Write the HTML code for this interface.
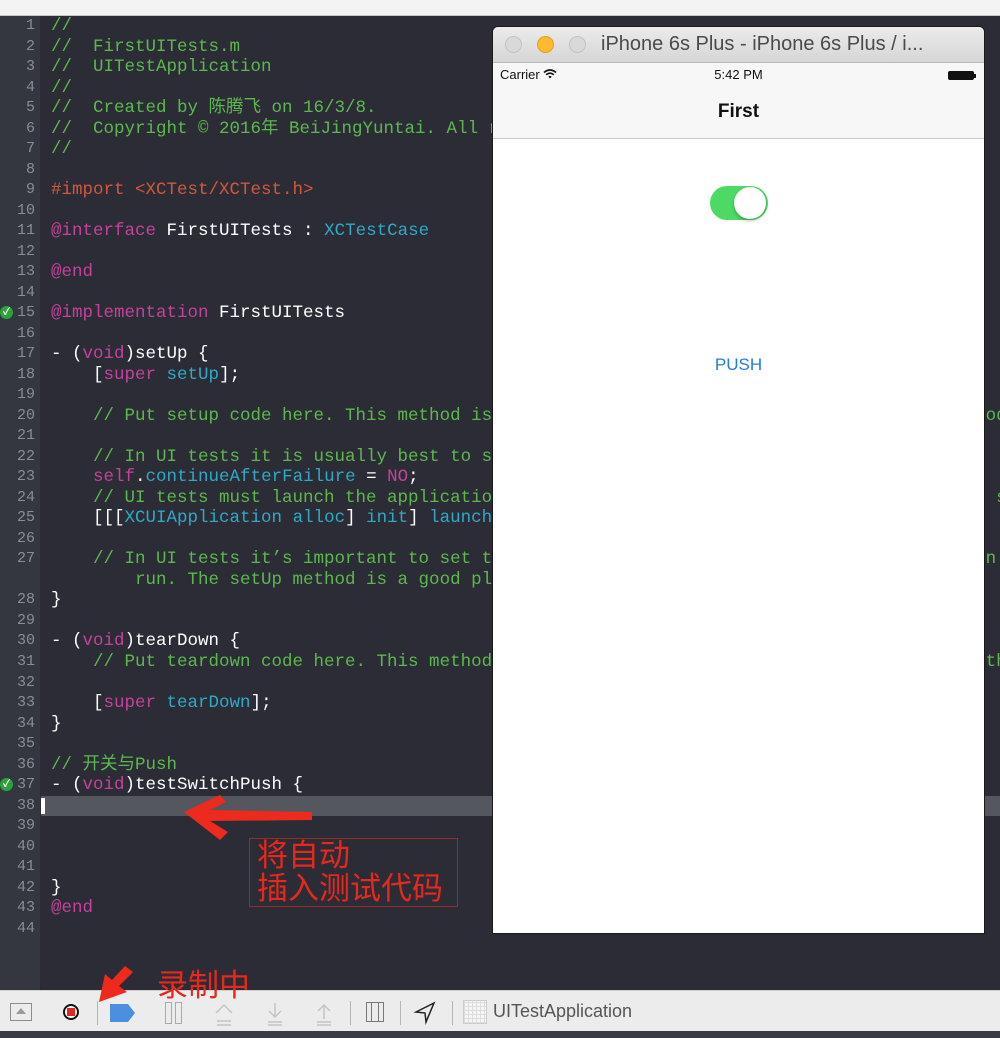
<!DOCTYPE html>
<html><head><meta charset="utf-8"><style>
html,body{margin:0;padding:0;}
body{width:1000px;height:1038px;overflow:hidden;position:relative;background:#2b2c35;font-family:"Liberation Sans","Noto Sans CJK SC",sans-serif;}
#top{position:absolute;left:0;top:0;width:1000px;height:15px;background:#f3f3f3;border-bottom:1px solid #c8c8c8;}
#gut{position:absolute;left:0;top:16px;width:40px;height:974px;background:#343640;border-right:1px solid #2a2b32;}
pre{margin:0;font-family:"Liberation Mono","Noto Sans CJK SC",monospace;font-size:17.5px;line-height:20.52px;}
#nums{position:absolute;left:0;top:16px;width:35px;text-align:right;color:#8b8d96;font-size:15px;}
#code{position:absolute;left:51px;top:16px;width:949px;overflow:hidden;color:#ffffff;white-space:pre;}
.c{color:#5cb84e}.k{color:#c4429b}.t{color:#2fa9c6}.p{color:#d2583d}
#hl{position:absolute;left:41px;top:796px;width:959px;height:20px;background:#55575e;}
#cur2{position:absolute;left:41px;top:798px;width:4px;height:16px;background:#fff}
.chk{position:absolute;left:0;width:13px;height:13px;border-radius:50%;background:#2aa43a;color:#fff;font-size:10px;line-height:13px;text-align:center;font-weight:bold;}
#sim{position:absolute;left:493px;top:27px;width:491px;height:906px;background:#fff;border-radius:5px 5px 0 0;box-shadow:0 0 0 1px #1a1a1a;}
#tb{height:35px;background:linear-gradient(#ebebeb,#d6d6d6);border-bottom:1px solid #b8b8b8;border-radius:5px 5px 0 0;position:relative;}
.dot{position:absolute;top:9px;width:17px;height:17px;border-radius:50%;background:#d9d9d9;border:1px solid #c2c2c2;box-sizing:border-box;}
#tt{position:absolute;left:108px;top:6px;font-size:20px;color:#4a4a4a;}
#nav{height:75px;background:#f7f7f7;border-bottom:1px solid #c9c9c9;position:relative;}
#tool{position:absolute;left:0;top:990px;width:1000px;height:40px;background:#ececec;border-top:1px solid #d0d0d0;}
#bot{position:absolute;left:0;top:1031px;width:1000px;height:7px;background:#3a3c45;}
.sep{position:absolute;top:10px;width:1px;height:24px;background:#b5b5b5;}
.red{position:absolute;color:#e8271d;font-size:31px;line-height:33px;}
</style></head><body>
<div id="top"></div>
<div id="gut"></div>
<div id="hl"></div><div id="cur2"></div>
<pre id="nums">1
2
3
4
5
6
7
8
9
10
11
12
13
14
15
16
17
18
19
20
21
22
23
24
25
26
27

28
29
30
31
32
33
34
35
36
37
38
39
40
41
42
43
44</pre>
<div class="chk" style="top:306px">✓</div>
<div class="chk" style="top:778px">✓</div>
<pre id="code"><span class="c">//
//  FirstUITests.m
//  UITestApplication
//
//  Created by 陈腾飞 on 16/3/8.
//  Copyright © 2016年 BeiJingYuntai. All rights reserved.
//</span>

<span class="p">#import &lt;XCTest/XCTest.h&gt;</span>

<span class="k">@interface</span> FirstUITests : <span class="t">XCTestCase</span>

<span class="k">@end</span>

<span class="k">@implementation</span> FirstUITests

- (<span class="k">void</span>)setUp {
    [<span class="k">super</span> <span class="t">setUp</span>];

<span class="c">    // Put setup code here. This method is called before the invocation of each test method in the class.</span>

<span class="c">    // In UI tests it is usually best to stop immediately when a failure occurs.</span>
    <span class="k">self</span>.<span class="t">continueAfterFailure</span> = <span class="k">NO</span>;
<span class="c">    // UI tests must launch the application that they test. Doing this in setup will make sure it happens</span>
    [[[<span class="t">XCUIApplication</span> <span class="t">alloc</span>] <span class="t">init</span>] <span class="t">launch</span>];

<span class="c">    // In UI tests it’s important to set the initial state - such as interface orientation - required fon
        run. The setUp method is a good place to do this.</span>
}

- (<span class="k">void</span>)tearDown {
<span class="c">    // Put teardown code here. This method is called after the invocation of each test method in the class.</span>

    [<span class="k">super</span> <span class="t">tearDown</span>];
}

<span class="c">// 开关与Push</span>
- (<span class="k">void</span>)testSwitchPush {




}
<span class="k">@end</span>
</pre>

<svg style="position:absolute;left:170px;top:790px" width="160" height="50"><path d="M14 22 L50 5 L56 12 L40 20 L142 22 L142 30 L40 31 L58 42 L50 50 Z" fill="#ee2a1e"/></svg>
<div style="position:absolute;left:249px;top:838px;width:207px;height:67px;border:1px solid #9a2a24;"></div>
<div class="red" style="left:257px;top:839px">将自动<br>插入测试代码</div>

<div id="sim">
<div id="tb">
<div class="dot" style="left:12px"></div>
<div class="dot" style="left:44px;background:#fdbb2d;border-color:#e0a020"></div>
<div class="dot" style="left:76px"></div>
<div id="tt">iPhone 6s Plus - iPhone 6s Plus / i...</div>
</div>
<div id="nav">
<div style="position:absolute;left:7px;top:4px;font-size:13px;color:#111">Carrier <svg width="14" height="10" viewBox="0 0 14 10" style="vertical-align:0"><path d="M1 3.5 Q7 -1.5 13 3.5 M3.2 5.8 Q7 2.5 10.8 5.8" stroke="#111" stroke-width="1.6" fill="none"/><path d="M5.3 7.6 Q7 6.4 8.7 7.6 L7 9.5 Z" fill="#111"/></svg></div>
<div style="position:absolute;left:0;width:491px;text-align:center;top:4px;font-size:13px;color:#111">5:42 PM</div>
<div style="position:absolute;left:455px;top:8px;width:26px;height:9px;background:#111;border-radius:2px"></div>
<div style="position:absolute;left:481px;top:11px;width:2px;height:4px;background:#111"></div>
<div style="position:absolute;left:0;width:491px;text-align:center;top:38px;font-size:19px;font-weight:bold;color:#111">First</div>
</div>
<div style="position:absolute;left:217px;top:159px;width:58px;height:34px;border-radius:17px;background:#4cd964;"></div>
<div style="position:absolute;left:241px;top:160px;width:32px;height:32px;border-radius:50%;background:#fff;box-shadow:0 2px 3px rgba(0,0,0,.25);"></div>
<div style="position:absolute;left:0;width:491px;text-align:center;top:328px;font-size:17px;color:#1f7de0">PUSH</div>
</div>

<div id="tool">
<div style="position:absolute;left:10px;top:12px;width:22px;height:18px;border:1px solid #8d8d8d;box-sizing:border-box"></div>
<div style="position:absolute;left:16px;top:17px;width:0;height:0;border-left:5px solid transparent;border-right:5px solid transparent;border-bottom:6px solid #999"></div>
<div style="position:absolute;left:63px;top:13px;width:16px;height:16px;border:2px solid #111;border-radius:50%;box-sizing:border-box;background:#fff"></div>
<div style="position:absolute;left:67px;top:17px;width:8px;height:8px;background:#e0271d"></div>
<div class="sep" style="left:97px"></div>
<svg style="position:absolute;left:110px;top:13px" width="26" height="18"><path d="M0 0 H18 L25 9 L18 18 H0 Z" fill="#4a8fe0"/></svg>
<div style="position:absolute;left:165px;top:11px;width:5px;height:20px;border:1px solid #aaa"></div>
<div style="position:absolute;left:175px;top:11px;width:5px;height:20px;border:1px solid #aaa"></div>
<svg style="position:absolute;left:213px;top:10px" width="130" height="26" fill="none" stroke="#c4c4c4" stroke-width="1.5"><path d="M3 12 L11 4 L19 12 M4 20 H18 M4 24 H18"/><path d="M62 2 V16 M56 10 L62 16 L68 10 M55 21 H69 M55 24 H69"/><path d="M111 18 V4 M105 10 L111 4 L117 10 M104 21 H118 M104 24 H118"/></svg>
<div class="sep" style="left:350px"></div>
<div style="position:absolute;left:366px;top:11px;width:18px;height:20px;border:1px solid #777;box-sizing:border-box"></div>
<div style="position:absolute;left:371px;top:11px;width:8px;height:20px;border-left:1px solid #777;border-right:1px solid #777;box-sizing:border-box"></div>
<div class="sep" style="left:400px"></div>
<svg style="position:absolute;left:413px;top:10px" width="24" height="24"><path d="M21 2 L3 11 L12 12 L13 21 Z" fill="none" stroke="#222" stroke-width="1.5"/></svg>
<div class="sep" style="left:452px"></div>
<div style="position:absolute;left:463px;top:9px;width:24px;height:24px;border:1px solid #ccc;box-sizing:border-box;background:repeating-linear-gradient(90deg,#ddd 0 1px,transparent 1px 4px),repeating-linear-gradient(0deg,#ddd 0 1px,#f5f5f5 1px 4px)"></div>
<div style="position:absolute;left:493px;top:10px;font-size:18px;color:#555">UITestApplication</div>
</div>
<div id="bot"></div>

<svg style="position:absolute;left:95px;top:962px" width="60" height="48"><path d="M4 40 L10 12 L17 18 L30 4 L38 10 L24 24 L32 30 Z" fill="#ee2a1e"/></svg>
<div class="red" style="left:157px;top:969px">录制中</div>
</body></html>
